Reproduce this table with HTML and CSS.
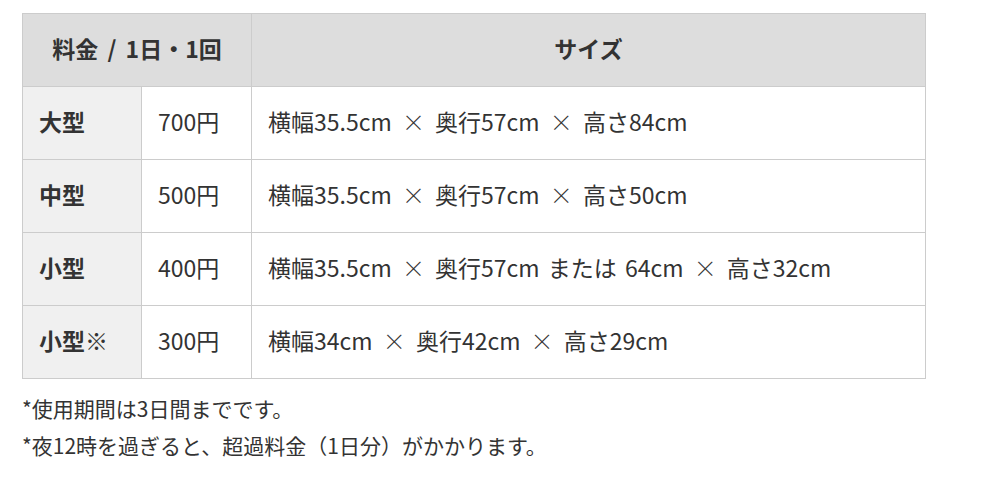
FILE: index.html
```html
<!DOCTYPE html>
<html lang="ja">
<head>
<meta charset="utf-8">
<link rel="stylesheet" href="styles.css">
</head>
<body>
<div class="wrap">
  <table class="price">
    <colgroup>
      <col class="c1"><col class="c2"><col class="c3">
    </colgroup>
    <thead>
      <tr><th colspan="2">料金 / 1日・1回</th><th>サイズ</th></tr>
    </thead>
    <tbody>
      <tr><th class="kind">大型</th><td>700円</td><td>横幅35.5cm <span class="x">×</span> 奥行57cm <span class="x">×</span> 高さ84cm</td></tr>
      <tr><th class="kind">中型</th><td>500円</td><td>横幅35.5cm <span class="x">×</span> 奥行57cm <span class="x">×</span> 高さ50cm</td></tr>
      <tr><th class="kind">小型</th><td>400円</td><td>横幅35.5cm <span class="x">×</span> 奥行57cm または 64cm <span class="x">×</span> 高さ32cm</td></tr>
      <tr><th class="kind">小型※</th><td>300円</td><td>横幅34cm <span class="x">×</span> 奥行42cm <span class="x">×</span> 高さ29cm</td></tr>
    </tbody>
  </table>
  <p class="note first">*使用期間は3日間までです。</p>
  <p class="note">*夜12時を過ぎると、超過料金（1日分）がかかります。</p>
</div>
</body>
</html>
```

FILE: styles.css
```css
html, body {
  margin: 0;
  padding: 0;
  background: #fff;
}
body {
  font-family: "Noto Sans CJK JP", "Noto Sans", sans-serif;
  color: #333;
}
.wrap {
  padding: 13px 0 0 22px;
  width: 904px;
}
.price {
  width: 904px;
  border-collapse: collapse;
  table-layout: fixed;
  font-size: 23px;
  word-spacing: 3px;
}
.c1 { width: 119px; }
.c2 { width: 110px; }
.price th, .price td {
  border: 1px solid #ccc;
  height: 73px;
  padding: 0 16px 4px;
  line-height: 1.4;
  text-align: left;
  font-weight: normal;
  box-sizing: border-box;
}
.price thead th {
  background: #ddd;
  text-align: center;
  font-weight: bold;
  word-spacing: 4px;
}
.price th.kind {
  background: #f0f0f0;
  font-weight: bold;
}
.x {
  margin: 0 2px;
  font-weight: 300;
}
.note {
  margin: 0;
  font-size: 21px;
  line-height: 37px;
}
.note.first {
  margin-top: 11px;
}
```
